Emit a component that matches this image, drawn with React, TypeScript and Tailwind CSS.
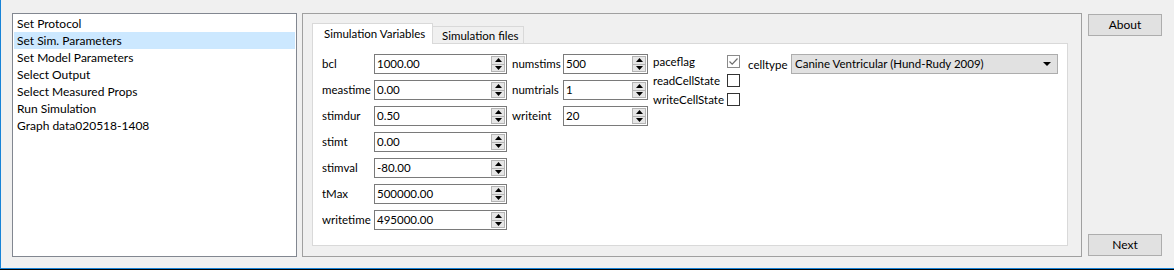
import React from 'react';

const navItems = [
  'Set Protocol',
  'Set Sim. Parameters',
  'Set Model Parameters',
  'Select Output',
  'Select Measured Props',
  'Run Simulation',
  'Graph data020518-1408',
];

const leftFields = [
  ['bcl', '1000.00'],
  ['meastime', '0.00'],
  ['stimdur', '0.50'],
  ['stimt', '0.00'],
  ['stimval', '-80.00'],
  ['tMax', '500000.00'],
  ['writetime', '495000.00'],
];

const midFields = [
  ['numstims', '500'],
  ['numtrials', '1'],
  ['writeint', '20'],
];

const checks: [string, boolean][] = [
  ['paceflag', true],
  ['readCellState', false],
  ['writeCellState', false],
];

function SpinBox({ value, width }: { value: string; width: string }) {
  return (
    <div className={`${width} h-[20px] flex border border-[#7a7a7a] bg-white`}>
      <span className="flex-1 pl-[2px] leading-[18px] whitespace-nowrap">{value}</span>
      <div className="w-[14px] m-px flex flex-col border border-[#b4b4b4] bg-[#e6e6e6]">
        <div className="flex-1 flex items-center justify-center border-b border-[#b4b4b4]">
          <svg width="7" height="4" viewBox="0 0 7 4">
            <path d="M0 4 L3.5 0 L7 4 Z" fill="#000" />
          </svg>
        </div>
        <div className="flex-1 flex items-center justify-center">
          <svg width="7" height="4" viewBox="0 0 7 4">
            <path d="M0 0 L3.5 4 L7 0 Z" fill="#000" />
          </svg>
        </div>
      </div>
    </div>
  );
}

function CheckBox({ checked }: { checked: boolean }) {
  return (
    <div
      className={`w-[13px] h-[13px] flex items-center justify-center bg-white border ${
        checked ? 'border-[#8a8a8a]' : 'border-[#333333]'
      }`}
    >
      {checked && (
        <svg width="11" height="11" viewBox="0 0 11 11">
          <path d="M1.5 5.5 L4.2 8.2 L9.5 2.5" stroke="#6d6d6d" strokeWidth="1.2" fill="none" />
        </svg>
      )}
    </div>
  );
}

export default function App() {
  return (
    <div className="w-[1174px] h-[270px] flex flex-col bg-[#f0f0f0] text-[11.5px] text-black font-['Lato','Liberation_Sans',Arial,sans-serif]">
      <div className="h-[268px] flex border-l border-[#1883d7] pl-[11px] pt-[13px]">
        {/* nav list */}
        <div className="w-[285px] h-[244px] border border-[#828790] bg-white p-px text-[12px]">
          {navItems.map((item, i) => (
            <div
              key={item}
              className={`h-[17px] leading-[17px] pl-[3px] whitespace-nowrap ${
                i === 1 ? 'bg-[#cce8ff]' : ''
              }`}
            >
              {item}
            </div>
          ))}
        </div>

        {/* parameter group */}
        <div className="ml-[5px] w-[780px] h-[244px] border border-[#a0a0a0] pl-[9px] pt-[9px]">
          <div className="w-[756px] flex flex-col">
            <div className="h-[20px] flex items-end">
              <div className="relative z-10 -mb-px h-[21px] w-[121px] pl-[11px] leading-[19px] whitespace-nowrap bg-white border border-b-0 border-[#d9d9d9]">
                Simulation Variables
              </div>
              <div className="h-[17px] w-[91px] pl-[9px] leading-[17px] whitespace-nowrap bg-[#f0f0f0] border border-l-0 border-b-0 border-[#d9d9d9]">
                Simulation files
              </div>
            </div>
            <div className="h-[203px] border border-[#d9d9d9] bg-white pl-[9px] pt-[10px] flex">
              <div className="flex flex-col gap-[6px]">
                {leftFields.map(([label, value]) => (
                  <div key={label} className="flex items-center">
                    <span className="w-[52px] whitespace-nowrap">{label}</span>
                    <SpinBox value={value} width="w-[133px]" />
                  </div>
                ))}
              </div>
              <div className="ml-[5px] flex flex-col gap-[6px]">
                {midFields.map(([label, value]) => (
                  <div key={label} className="flex items-center">
                    <span className="w-[51px] whitespace-nowrap">{label}</span>
                    <SpinBox value={value} width="w-[85px]" />
                  </div>
                ))}
              </div>
              <div className="ml-[5px] pt-px flex flex-col">
                {checks.map(([label, checked]) => (
                  <div key={label} className="h-[19px] flex items-start">
                    <span className="w-[74px] leading-[13px] whitespace-nowrap">{label}</span>
                    <CheckBox checked={checked} />
                  </div>
                ))}
              </div>
              <div className="ml-[8px] flex items-start">
                <span className="w-[43px] pt-px leading-[20px] whitespace-nowrap">celltype</span>
                <div className="w-[267px] h-[20px] flex items-center border border-[#adadad] bg-[#e1e1e1] pl-[3px] pr-[6px]">
                  <span className="flex-1 whitespace-nowrap">Canine Ventricular (Hund-Rudy 2009)</span>
                  <svg width="8" height="4" viewBox="0 0 8 4">
                    <path d="M0 0 L4 4 L8 0 Z" fill="#000" />
                  </svg>
                </div>
              </div>
            </div>
          </div>
        </div>

        {/* buttons */}
        <div className="ml-[6px] h-[244px] pt-px pb-px flex flex-col justify-between">
          <button className="w-[74px] h-[22px] border border-[#adadad] bg-[#e1e1e1] text-center leading-[20px] text-[12px]">
            About
          </button>
          <button className="w-[74px] h-[22px] border border-[#adadad] bg-[#e1e1e1] text-center leading-[20px] text-[12px]">
            Next
          </button>
        </div>
      </div>
      <div className="h-px bg-[#1883d7]" />
      <div className="h-px bg-black" />
    </div>
  );
}
